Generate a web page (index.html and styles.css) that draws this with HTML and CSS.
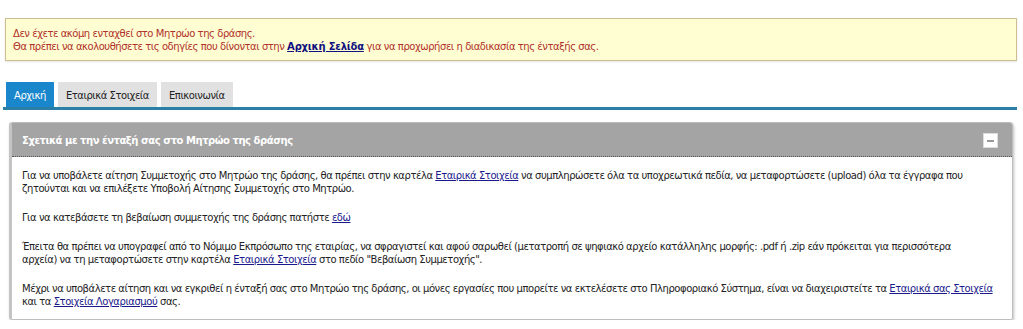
FILE: index.html
```html
<!DOCTYPE html>
<html lang="el">
<head>
  <meta charset="UTF-8" />
  <title>Μητρώο της δράσης</title>
  <link rel="stylesheet" href="styles.css">
</head>
<body>
  <div class="notice">
    Δεν έχετε ακόμη ενταχθεί στο Μητρώο της δράσης.<br>
    Θα πρέπει να ακολουθήσετε τις οδηγίες που δίνονται στην <a href="#">Αρχική Σελίδα</a> για να προχωρήσει η διαδικασία της ένταξής σας.
  </div>

  <div class="tabs">
    <a class="tab active" href="#">Αρχική</a>
    <a class="tab" href="#">Εταιρικά Στοιχεία</a>
    <a class="tab" href="#">Επικοινωνία</a>
  </div>

  <div class="panel">
    <div class="panel-header">
      <span>Σχετικά με την ένταξή σας στο Μητρώο της δράσης</span>
      <span class="toggle"></span>
    </div>
    <div class="panel-body">
      <p>Για να υποβάλετε αίτηση Συμμετοχής στο Μητρώο της δράσης, θα πρέπει στην καρτέλα <a href="#">Εταιρικά Στοιχεία</a> να συμπληρώσετε όλα τα υποχρεωτικά πεδία, να μεταφορτώσετε (upload) όλα τα έγγραφα που ζητούνται και να επιλέξετε Υποβολή Αίτησης Συμμετοχής στο Μητρώο.</p>
      <p>Για να κατεβάσετε τη βεβαίωση συμμετοχής της δράσης πατήστε <a href="#">εδώ</a></p>
      <p>Έπειτα θα πρέπει να υπογραφεί από το Νόμιμο Εκπρόσωπο της εταιρίας, να σφραγιστεί και αφού σαρωθεί (μετατροπή σε ψηφιακό αρχείο κατάλληλης μορφής: .pdf ή .zip εάν πρόκειται για περισσότερα<br>αρχεία) να τη μεταφορτώσετε στην καρτέλα <a href="#">Εταιρικά Στοιχεία</a> στο πεδίο "Βεβαίωση Συμμετοχής".</p>
      <p>Μέχρι να υποβάλετε αίτηση και να εγκριθεί η ένταξή σας στο Μητρώο της δράσης, οι μόνες εργασίες που μπορείτε να εκτελέσετε στο Πληροφοριακό Σύστημα, είναι να διαχειριστείτε τα <a href="#">Εταιρικά σας Στοιχεία</a> και τα <a href="#">Στοιχεία Λογαριασμού</a> σας.</p>
    </div>
  </div>
</body>
</html>
```

FILE: styles.css
```css
body {
  margin: 0;
  padding: 18px 6px 0 5px;
  font-family: 'DejaVu Sans', Verdana, sans-serif;
  font-size: 10px;
  letter-spacing: -0.45px;
  color: #222;
  background: #fff;
}

a {
  color: #1a1a8c;
}

.notice {
  background-color: #fffdd2;
  border: 1px solid #cdbf92;
  color: #b0302a;
  padding: 8px 7px 7px;
  line-height: 13px;
  box-shadow: 0 1px 2px rgba(0, 0, 0, 0.1);
}

.notice a {
  color: #101080;
  font-weight: bold;
  letter-spacing: -0.2px;
}

.tabs {
  display: flex;
  gap: 4px;
  margin: 21px 0 0 -2px;
  padding-left: 3px;
  border-bottom: 3px solid #2b7ea6;
}

.tab {
  display: block;
  padding: 8px 8px 5px;
  line-height: 12px;
  background-color: #e1e1e1;
  color: #222;
  text-decoration: none;
}

.tab.active {
  background-color: #1a87cc;
  color: #fff;
}

.panel {
  margin: 12px 4px 0 4px;
  border: 1px solid #bdbdbd;
  border-left: 3px solid #c4c4c4;
  border-radius: 3px;
  box-shadow: 1px 2px 3px rgba(0, 0, 0, 0.25);
  overflow: hidden;
}

.panel-header {
  display: flex;
  justify-content: space-between;
  align-items: center;
  background-color: #a4a4a4;
  color: #fff;
  font-weight: bold;
  padding: 10px 14px 8px 10px;
  line-height: 14px;
  border-bottom: 1px dotted #555;
}

.toggle {
  position: relative;
  width: 13px;
  height: 13px;
  background-color: #fff;
  border: 1px solid #ddd;
}

.toggle::after {
  content: "";
  position: absolute;
  left: 3px;
  right: 3px;
  top: 6px;
  height: 2px;
  background-color: #999;
}

.panel-body {
  background-color: #fff;
  padding: 12px 3px 11px 10px;
  line-height: 13px;
}

.panel-body p {
  margin: 0 0 16px;
}

.panel-body p:last-child {
  margin-bottom: 0;
}
```
